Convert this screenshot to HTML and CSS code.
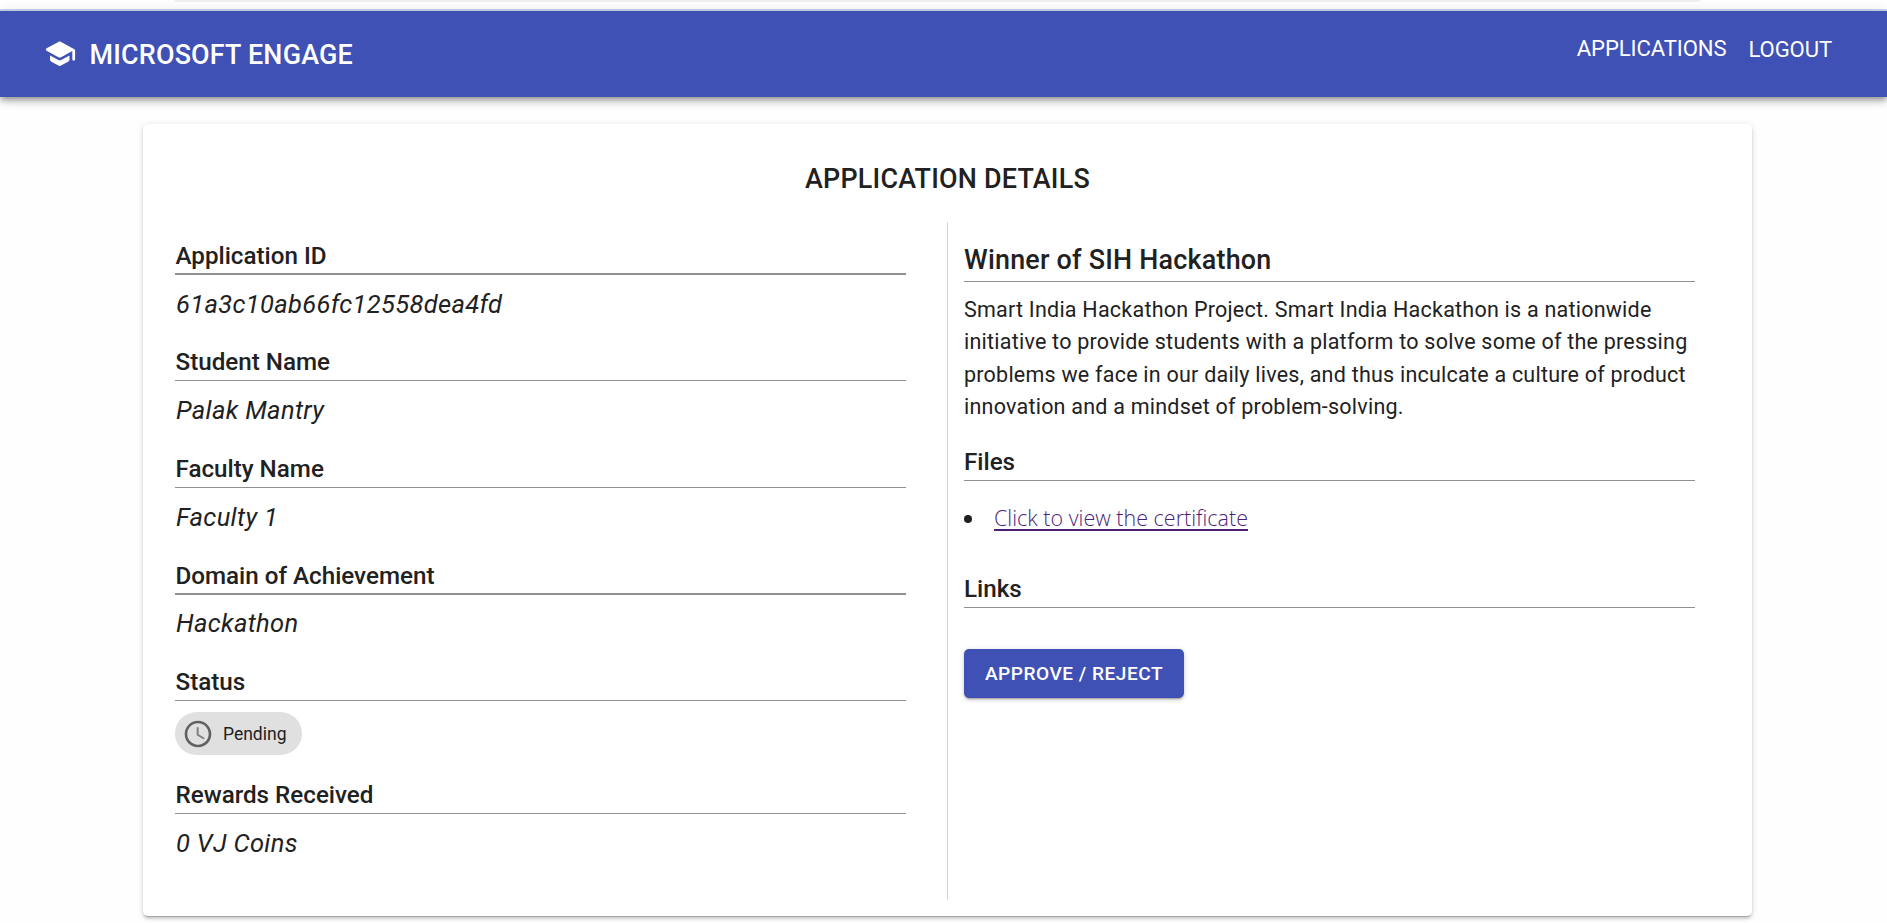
FILE: index.html
```html
<!DOCTYPE html>
<html lang="en">
<head>
<meta charset="utf-8">
<title>Application Details</title>
<link rel="stylesheet" href="styles.css">
</head>
<body>
<div class="browser-edge"><div class="address-bar"></div></div>
<header class="app-bar">
  <div class="brand">
    <svg class="brand-icon" viewBox="0 0 24 24"><path d="M5 13.18v2.81c0 .73.4 1.41 1.04 1.76l5 2.73c.6.33 1.32.33 1.92 0l5-2.73c.64-.35 1.04-1.03 1.04-1.76v-2.81l-6.04 3.3c-.6.33-1.32.33-1.92 0L5 13.18zm6.04-9.66l-8.43 4.6c-.69.38-.69 1.38 0 1.76l8.43 4.6c.6.33 1.32.33 1.92 0L21 10.09V16c0 .55.45 1 1 1s1-.45 1-1V9.59c0-.37-.2-.7-.52-.88l-9.52-5.19c-.6-.32-1.32-.32-1.92 0z"/></svg>
    <span class="brand-name">MICROSOFT ENGAGE</span>
  </div>
  <nav class="nav"><a class="nav-link">APPLICATIONS</a><a class="nav-link nav-logout">LOGOUT</a></nav>
</header>
<main class="card">
  <h1 class="card-title">APPLICATION DETAILS</h1>
  <div class="columns">
    <section class="col-left">
      <div class="field"><h2 class="label thick">Application ID</h2><p class="value">61a3c10ab66fc12558dea4fd</p></div>
      <div class="field"><h2 class="label">Student Name</h2><p class="value">Palak Mantry</p></div>
      <div class="field short"><h2 class="label">Faculty Name</h2><p class="value">Faculty 1</p></div>
      <div class="field"><h2 class="label thick">Domain of Achievement</h2><p class="value">Hackathon</p></div>
      <div class="field status"><h2 class="label">Status</h2>
        <div class="chip"><svg class="chip-icon" viewBox="0 0 24 24"><path d="M11.99 2C6.47 2 2 6.48 2 12s4.47 10 9.99 10C17.52 22 22 17.52 22 12S17.52 2 11.99 2zM12 20c-4.42 0-8-3.58-8-8s3.58-8 8-8 8 3.58 8 8-3.58 8-8 8z"/><path class="hands" d="M12.5 7H11v6l5.25 3.15.75-1.23-4.5-2.67z"/></svg><span class="chip-text">Pending</span></div>
      </div>
      <div class="field"><h2 class="label">Rewards Received</h2><p class="value">0 VJ Coins</p></div>
    </section>
    <section class="col-right">
      <h2 class="achievement">Winner of SIH Hackathon</h2>
      <p class="description">Smart India Hackathon Project. Smart India Hackathon is a nationwide<br>initiative to provide students with a platform to solve some of the pressing<br>problems we face in our daily lives, and thus inculcate a culture of product<br>innovation and a mindset of problem-solving.</p>
      <h2 class="label">Files</h2>
      <ul class="files"><li class="file"><a class="file-link">Click to view the certificate</a></li></ul>
      <h2 class="label">Links</h2>
      <button class="button">APPROVE / REJECT</button>
    </section>
  </div>
</main>
</body>
</html>
```
FILE: styles.css
```css
* { box-sizing: border-box; }
body { margin: 0; height: 923px; overflow: hidden; background: #fefefe; font-family: Roboto, "Liberation Sans", sans-serif; color: #212121; }
h1, h2, p, ul { margin: 0; padding: 0; font-weight: 400; }
.browser-edge { height: 11px; border-bottom: 2px solid #cbd6ee; padding: 0 187px 0 174px; background: #fff; }
.address-bar { height: 2px; background: #f0f0f1; border-radius: 0 0 4px 4px; }
.app-bar { height: 86px; display: flex; justify-content: space-between; padding: 0 55px 0 43px; background: #3f51b5; color: #fff; box-shadow: 0 3px 5px -1px rgba(0,0,0,.25), 0 5px 7px rgba(0,0,0,.16), 0 1px 13px rgba(0,0,0,.12); }
.brand { display: flex; align-items: center; height: 86px; }
.brand-icon { width: 33.5px; height: 33.5px; fill: #fff; }
.brand-name { margin-left: 13px; font-size: 26.9px; font-weight: 500; line-height: 86px; padding-top: 1px; letter-spacing: .2px; }
.nav { display: flex; gap: 22px; padding-top: 21px; }
.nav-link { font-size: 22.1px; line-height: 32px; letter-spacing: -.1px; }
.nav-logout { padding-top: 1px; }
.card { width: 1609px; height: 792px; margin: 27px 0 0 143px; padding: 33px 57px 0 32px; background: #fff; border-radius: 5px; box-shadow: 0 3px 1px -2px rgba(0,0,0,.2), 0 3px 3px rgba(0,0,0,.14), 0 1px 7px rgba(0,0,0,.12); }
.card-title { padding-left: 25px; height: 65px; text-align: center; font-size: 26.9px; font-weight: 500; line-height: 45px; letter-spacing: .22px; }
.columns { display: flex; height: 678px; }
.col-left { width: 773px; padding: 17px 41px 0 0; border-right: 1px solid #d5d5d5; }
.col-right { width: 747px; padding: 16px 0 0 16px; }
.field { height: 107px; }
.field.short { height: 106px; }
.field.status { height: 113px; }
.label { border-bottom: 1px solid #909090; height: 35px; font-size: 24.2px; font-weight: 500; line-height: 32px; }
.label.thick { border-bottom-width: 2px; height: 36px; margin-bottom: -1px; line-height: 34px; }
.field .label { padding-left: .5px; }
.value { padding: 13px 0 0 1px; font-size: 25.5px; font-style: italic; line-height: 32px; letter-spacing: .33px; }
.field:first-child .value { padding-top: 14px; }
.chip { display: inline-flex; align-items: center; width: 127px; height: 43px; margin-top: 11px; padding-left: 7px; border-radius: 22px; background: #e0e0e0; }
.chip-icon { width: 32px; height: 32px; fill: #616161; }
.hands { fill: #808080; }
.chip-text { margin-left: 9px; font-size: 17.5px; }
.achievement { height: 44px; border-bottom: 1px solid #909090; font-size: 26.9px; font-weight: 500; line-height: 45px; letter-spacing: .22px; }
.description { padding-top: 12px; height: 164px; font-size: 21.5px; line-height: 32.3px; letter-spacing: .23px; }
.files { height: 92px; padding-top: 22px; list-style: none; }
.file { display: flex; align-items: center; height: 32px; }
.file::before { content: ""; width: 8px; height: 8px; border-radius: 50%; background: #212121; }
.file-link { margin-left: 22px; padding-bottom: 2px; font-family: "Open Sans", "Noto Sans", sans-serif; font-weight: 300; font-size: 21.5px; line-height: 30px; color: #4b1f78; text-decoration: underline; text-decoration-thickness: 2px; text-underline-offset: 3px; }
.button { display: block; width: 220px; height: 49px; margin-top: 41px; padding: 0; border: 0; border-radius: 5px; background: #3f51b5; color: #fff; font: 500 19.1px Roboto, sans-serif; letter-spacing: .5px; box-shadow: 0 3px 1px -2px rgba(0,0,0,.2), 0 2px 3px rgba(0,0,0,.14), 0 1px 6px rgba(0,0,0,.12); }
```
